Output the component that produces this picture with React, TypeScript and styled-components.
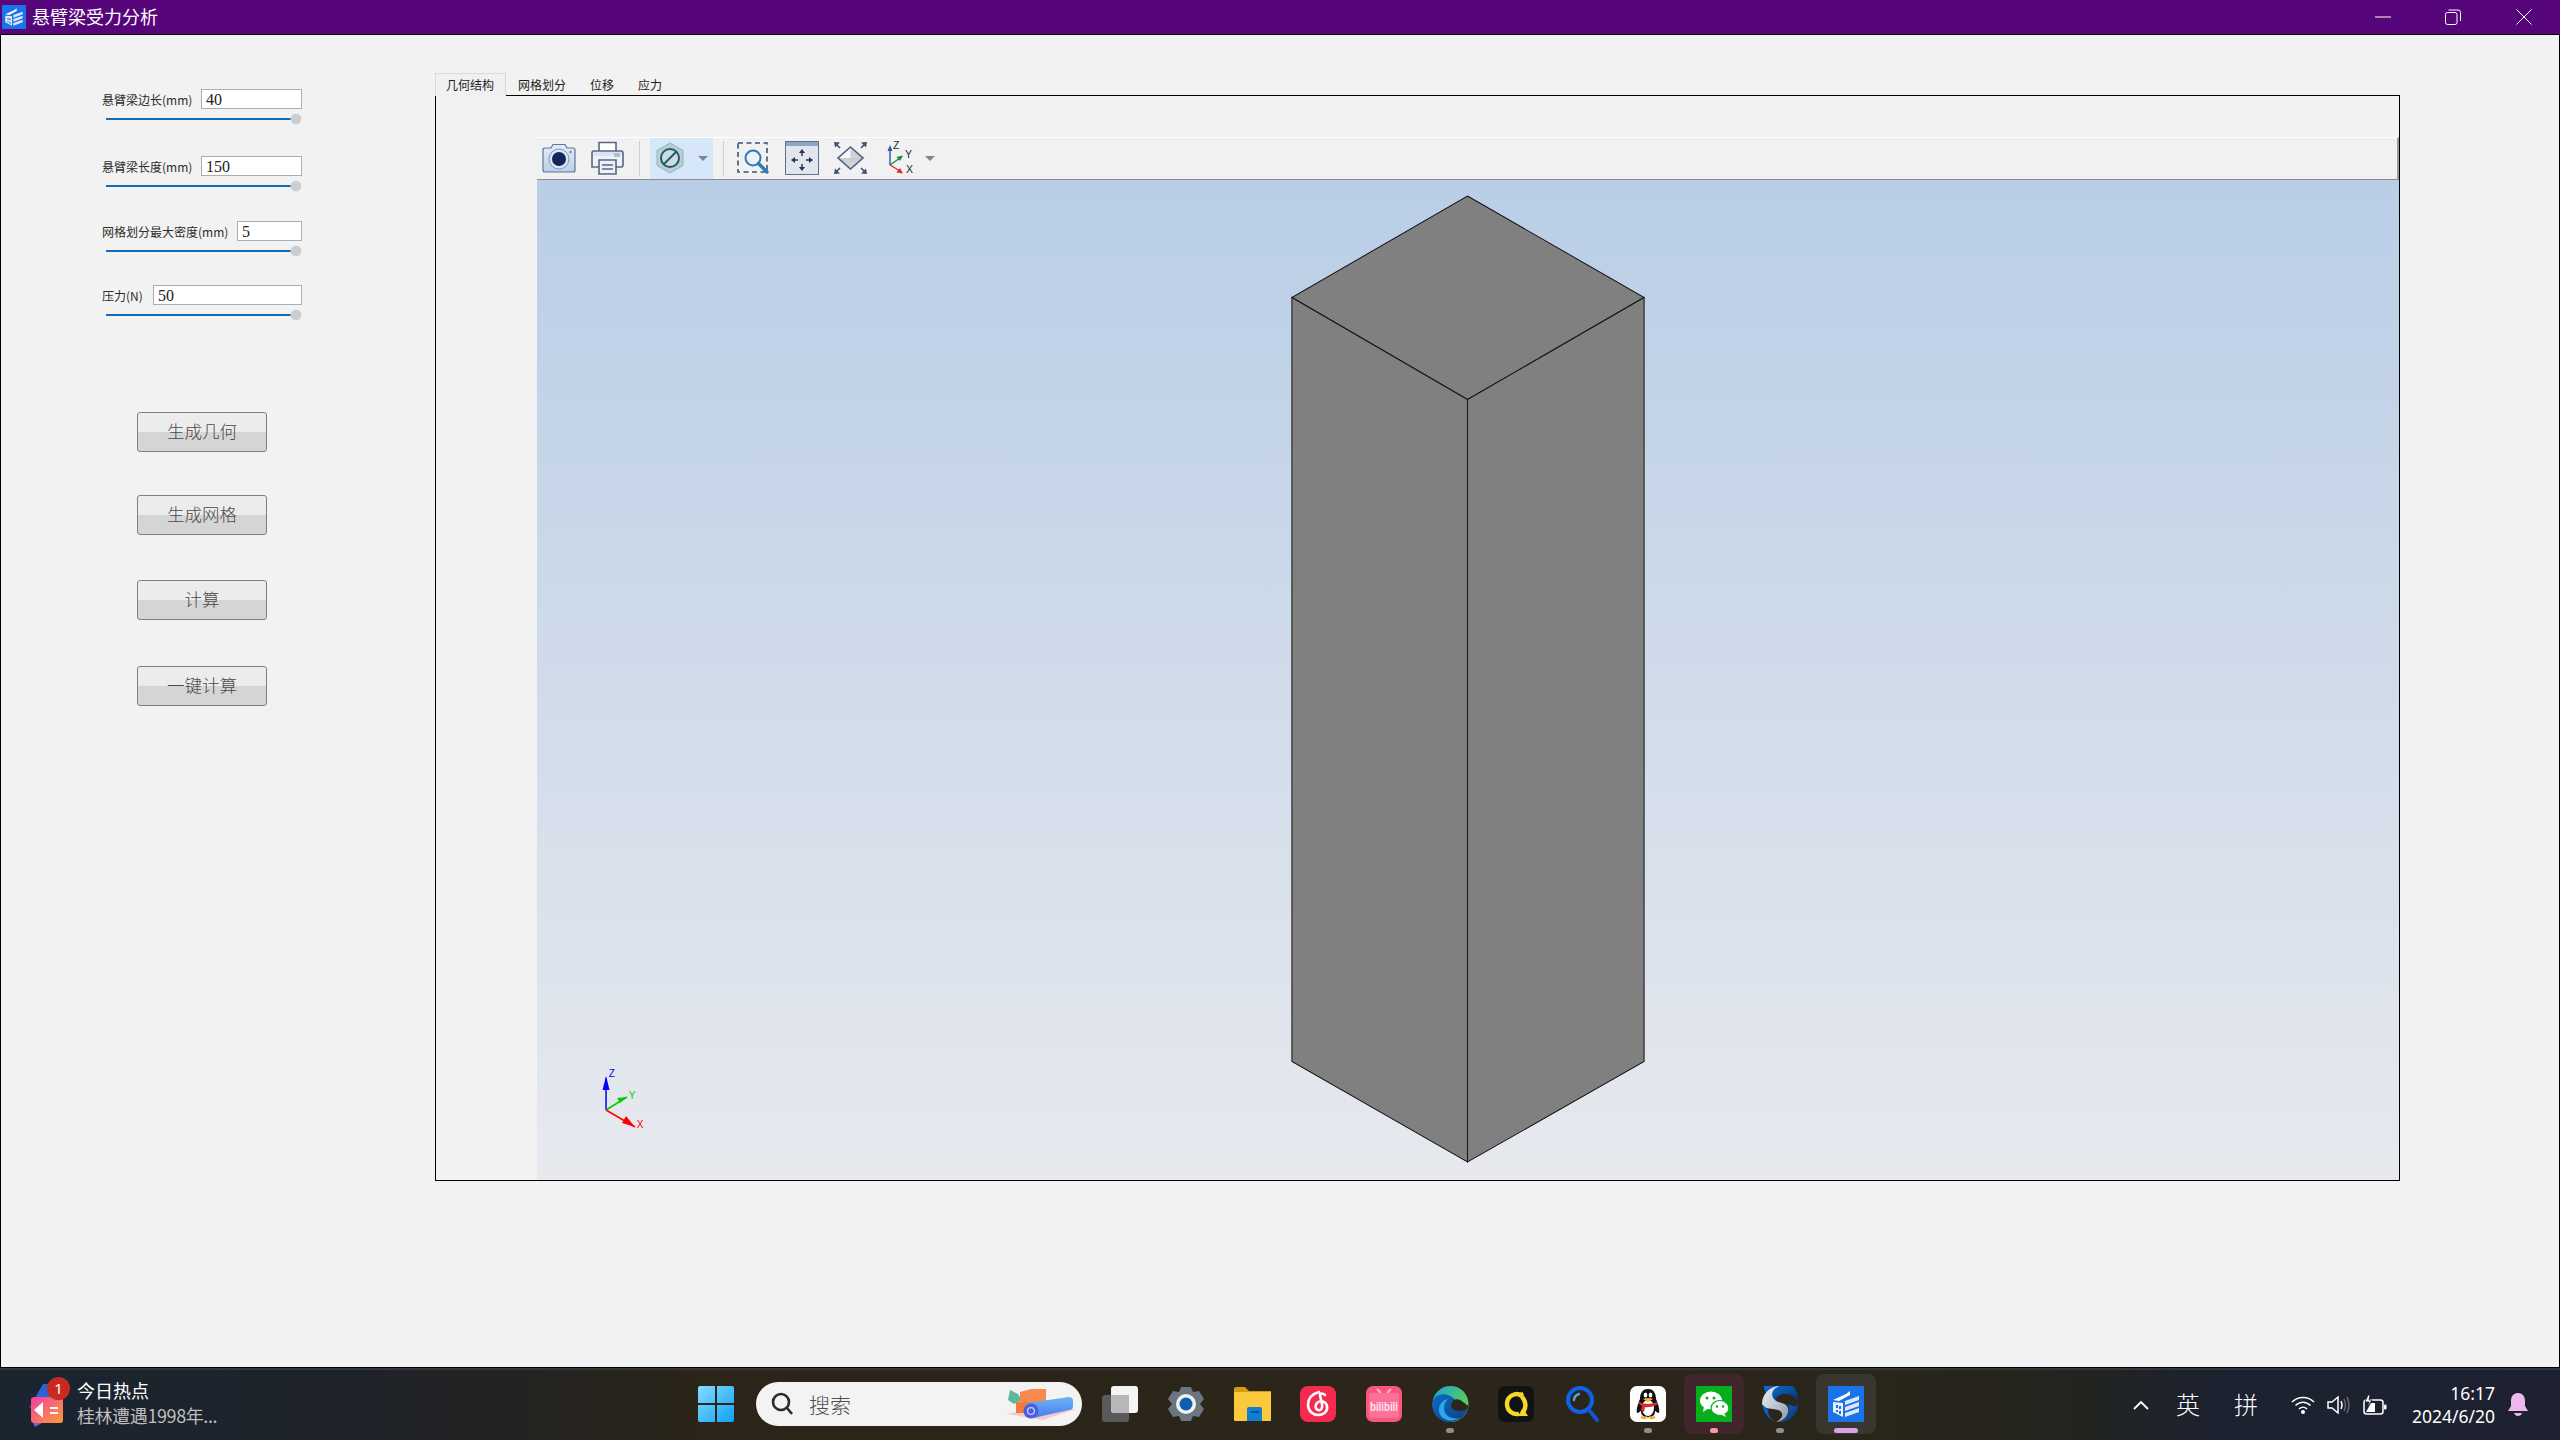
import React from "react";
import styled, { createGlobalStyle } from "styled-components";

const cjk = `"Noto Sans CJK SC", "Noto Sans", sans-serif`;

const Global = createGlobalStyle`
  html, body { margin: 0; padding: 0; background: #f2f2f2; overflow: hidden; }
  * { box-sizing: border-box; }
`;

const Screen = styled.div`
  width: 2560px; height: 1440px; display: flex; flex-direction: column; font-family: ${cjk};
`;

/* ---------- title bar ---------- */
const TitleBar = styled.div`
  height: 34px; flex: none; background: #56057b; display: flex; align-items: center; padding-left: 2px;
`;
const TitleText = styled.span`
  color: #fff; font-size: 18px; margin: -2px 0 0 6px; line-height: 34px; font-weight: 400;
`;
const WinControls = styled.div`
  margin-left: auto; display: flex; height: 100%; padding-right: 1px;
`;
const WinControl = styled.div`
  width: 70.5px; height: 34px; display: flex; align-items: center; justify-content: center;
  svg { display: block; }
`;

/* ---------- window ---------- */
const Window = styled.div`
  flex: 1; min-height: 0; background: #f2f2f2; border: 1px solid #000; display: flex;
`;
const Sidebar = styled.div`
  width: 434px; flex: none; padding: 54px 0 0 101px;
`;
const ParamGroup = styled.div<{ $top: number }>`
  width: 200px; margin-top: ${(p) => p.$top}px;
`;
const ParamRow = styled.div`
  display: flex; align-items: center; justify-content: space-between; height: 20px;
`;
const ParamLabel = styled.label`
  font-size: 12px; color: #2c2c2c; white-space: nowrap; line-height: 21px;
`;
const ParamInput = styled.input<{ $w: number }>`
  width: ${(p) => p.$w}px; height: 20px; border: 1px solid #adadad; background: #fff; padding: 2px 0 0 4px;
  font: 16px "Liberation Serif", serif; color: #222; outline: none;
`;
const SliderTrack = styled.div`
  position: relative; margin: 9px 0 0 4px; width: 185px; height: 2px; background: #0f6cbd;
`;
const SliderThumb = styled.div`
  position: absolute; left: 185px; top: -4px; width: 10px; height: 10px; border-radius: 50%;
  background: #cdcdcd; box-shadow: 0 0 0 0.5px #d8d8d8;
`;
const ButtonStack = styled.div`
  display: flex; flex-direction: column; align-items: flex-start; padding-left: 35px;
`;
const ActionButton = styled.button<{ $top: number }>`
  width: 130px; height: 40px; margin-top: ${(p) => p.$top}px; padding: 0 0 3px; border: 1px solid #808080; border-radius: 3px;
  background: linear-gradient(180deg, #ececec 0, #ececec 50%, #d5d5d5 50%, #d5d5d5 100%);
  font: 300 17.5px ${cjk}; color: #4a4a4a;
`;

/* ---------- tabs ---------- */
const Main = styled.div`
  width: 1965px; flex: none; padding-top: 38px; display: flex; flex-direction: column;
`;
const TabBar = styled.div`
  display: flex; height: 22px; position: relative; z-index: 1;
`;
const Tab = styled.div<{ $active?: boolean }>`
  height: ${(p) => (p.$active ? "23px" : "22px")}; padding: 0 12px; font-size: 12px; line-height: 24px; color: #1c1c1c;
  ${(p) => (p.$active ? "background:#f0f0f0; border:1px solid #dadada; border-bottom:none; padding:0 11px 0 10px; line-height:22px;" : "")}
`;
const Frame = styled.div`
  height: 1086px; border: 1px solid #000; padding: 41px 0 0 101px; display: flex; flex-direction: column;
`;
const ViewToolbar = styled.div`
  height: 43px; flex: none; background: #f1f1f1; border-top: 1px solid #fff; border-bottom: 1px solid #8c8c8c;
  border-right: 2px solid #9a9a9a; display: flex; align-items: center; padding: 0 0 1px 5px;
`;
const ToolIcon = styled.div<{ $ml: number }>`
  margin-left: ${(p) => p.$ml}px; display: flex; svg { display: block; }
`;
const ToolSeparator = styled.div<{ $ml: number }>`
  width: 1px; height: 35px; background: #cfcfcf; margin-left: ${(p) => p.$ml}px;
`;
const ActiveTool = styled.div`
  width: 63px; height: 41px; margin: 1px 0 0 10px; background: #d6e6fb; display: flex; align-items: center; padding: 0 0 1px 6px;
  svg { display: block; }
`;
const DropArrow = styled.div<{ $ml: number }>`
  margin-left: ${(p) => p.$ml}px; width: 0; height: 0; border-left: 5px solid transparent; border-right: 5px solid transparent;
  border-top: 5px solid #858585;
`;
const Canvas = styled.div`
  flex: 1; min-height: 0; background: linear-gradient(180deg, #b9cee6 0%, #e7e9ee 100%);
  svg { display: block; width: 100%; height: 100%; }
`;

/* ---------- taskbar ---------- */
const Taskbar = styled.div`
  height: 72px; flex: none; display: flex; align-items: stretch; border-top: 2px solid #34363a;
  background: linear-gradient(90deg, #1a2530 0%, #1e2229 14%, #2a2419 27%, #2b251a 60%, #2a251b 74%, #22241f 81%, #1c2130 87%, #1d2130 100%);
`;
const NewsWidget = styled.div`
  width: 686px; flex: none; display: flex; align-items: center; padding-left: 29px; position: relative;
`;
const NewsText = styled.div`
  margin: -5px 0 0 14px; display: flex; flex-direction: column;
`;
const NewsTitle = styled.div`
  font-size: 18px; line-height: 25px; color: #fff;
`;
const NewsSub = styled.div`
  font-size: 18px; line-height: 25px; color: #bfbfbf; white-space: nowrap; letter-spacing: -0.4px;
`;
const NewsBadge = styled.div`
  position: absolute; left: 47px; top: 7px; width: 23px; height: 23px; border-radius: 50%; background: #c92a20;
  color: #fff; font: 15px/23px "Noto Sans", sans-serif; text-align: center;
`;
const Slot = styled.div<{ $tint?: string }>`
  position: relative; width: 60px; height: 60px; margin-top: 4px; border-radius: 8px; flex: none;
  display: flex; align-items: center; justify-content: center;
  background: ${(p) => p.$tint ?? "transparent"};
  svg { display: block; }
`;
const RunDot = styled.div<{ $color: string; $wide?: boolean }>`
  position: absolute; bottom: 1px; left: 50%; transform: translateX(-50%); height: 5px; border-radius: 3px;
  width: ${(p) => (p.$wide ? "24px" : "8px")}; background: ${(p) => p.$color};
`;
const SearchPill = styled.div`
  width: 326px; height: 44px; flex: none; margin: 12px 0 0 10px; border-radius: 22px; background: #f3f3f3;
  display: flex; align-items: center; padding-left: 15px; position: relative;
`;
const SearchText = styled.span`
  font-size: 21px; line-height: 30px; color: #505050; margin-left: 16px; font-weight: 300; white-space: nowrap; flex: none;
`;
const SearchArt = styled.div`
  margin-left: auto; margin-right: 5px; svg { display: block; }
`;
const AppRow = styled.div`
  display: flex; gap: 6px; margin-left: 8px;
`;
const Tray = styled.div`
  margin-left: auto; display: flex; align-items: center; padding-right: 32px; color: #fff;
`;
const TrayIcon = styled.div<{ $ml: number }>`
  margin-left: ${(p) => p.$ml}px; display: flex; svg { display: block; }
`;
const TrayGlyph = styled.div<{ $ml: number }>`
  margin: -3px 0 0 ${(p) => p.$ml}px; font-size: 24px; line-height: 30px; width: 22px; display: flex; justify-content: center;
  font-weight: 300; white-space: nowrap;
`;
const Clock = styled.div`
  margin: -1px 0 0 26px; width: 82px; font: 17.5px/23px "Noto Sans", sans-serif; color: #fff; white-space: nowrap;
  display: flex; flex-direction: column; align-items: flex-end;
`;

/* ---------- drawings ---------- */
const AppLogo = ({ size }: { size: number }) => (
  <svg width={size} height={size} viewBox="0 0 36 36">
    <rect width="36" height="36" fill="#1a73e8" />
    <path d="M5 14 L18 8 L22 5 L22 9 L11 15 Z" fill="#fff" />
    <path d="M5 16 L15 17 L15 31 L5 26 Z" fill="#e8f0ff" />
    <path d="M8 19 h2 v3 h-2 Z M11 20 h2 v3 h-2 Z M8 24 h2 v2 h-2 Z M11 25 h2 v3 h-2 Z" fill="#1a73e8" />
    <path d="M17 15 L31 10 L31 14 L17 19 Z M17 21 L31 16 L31 20 L17 25 Z M17 27 L31 22 L31 26 L17 31 Z" fill="#dce8ff" />
  </svg>
);

const CameraIcon = () => (
  <svg width="34" height="30" viewBox="0 0 34 30">
    <defs>
      <linearGradient id="camB" x1="0" y1="0" x2="0" y2="1"><stop offset="0" stopColor="#e4edf8" /><stop offset="1" stopColor="#bccee6" /></linearGradient>
    </defs>
    <path d="M1 7 Q1 5 3 5 H9 L11 1.5 H23 L25 5 H31 Q33 5 33 7 V27 Q33 29 31 29 H3 Q1 29 1 27 Z" fill="url(#camB)" stroke="#5a769e" strokeWidth="1.2" />
    <circle cx="17" cy="16" r="10" fill="#dbe6f3" stroke="#7f9abd" />
    <circle cx="17" cy="16" r="7" fill="#10275c" />
    <circle cx="28.5" cy="9" r="1.2" fill="#6c86aa" />
  </svg>
);
const PrinterIcon = () => (
  <svg width="33" height="34" viewBox="0 0 33 34">
    <path d="M8 10 V1.5 H25 V10" fill="#fff" stroke="#54688a" strokeWidth="1.6" />
    <path d="M1 12 Q1 10 3 10 H30 Q32 10 32 12 V24 Q32 26 30 26 H1 Z" fill="#eef1f5" stroke="#54688a" strokeWidth="1.6" />
    <rect x="2" y="11" width="29" height="4" fill="#dfe3ea" />
    <path d="M23 13 h6 M23 15 h6" stroke="#8794a8" strokeWidth="1" />
    <path d="M8 19 H25 V33 H8 Z" fill="#eef1f5" stroke="#54688a" strokeWidth="1.6" />
    <path d="M11 24 H22 M11 28 H22" stroke="#54688a" strokeWidth="1.6" />
  </svg>
);
const NoEntryIcon = () => (
  <svg width="28" height="32" viewBox="0 0 28 32">
    <path d="M14 1 L27 8.5 V23.5 L14 31 L1 23.5 V8.5 Z" fill="#b8cfd6" stroke="#9bb1ba" />
    <circle cx="14" cy="16" r="9" fill="#cddde2" stroke="#1e5a68" strokeWidth="2" />
    <path d="M8 22 L20 10" stroke="#1e5a68" strokeWidth="2" />
  </svg>
);
const ZoomBoxIcon = () => (
  <svg width="32" height="32" viewBox="0 0 32 32">
    <rect x="1" y="1" width="29" height="29" fill="none" stroke="#3b5276" strokeWidth="1.6" strokeDasharray="5 3.5" />
    <circle cx="16" cy="16" r="7.5" fill="#eaf2f9" stroke="#2e7bb8" strokeWidth="2" />
    <path d="M21.5 21.5 L30 30" stroke="#2e7bb8" strokeWidth="3.4" strokeLinecap="round" />
  </svg>
);
const FitIcon = () => (
  <svg width="34" height="34" viewBox="0 0 34 34">
    <rect x="0.5" y="0.5" width="33" height="33" fill="#e2e5ec" stroke="#5c7094" />
    <rect x="1" y="1" width="32" height="4" fill="#8fa5c4" />
    <path d="M17 11 V15 M17 23 V27 M9 19 H13 M21 19 H25" stroke="#1f3557" strokeWidth="1.4" />
    <path d="M17 8 l-3 4 h6 Z M17 30 l-3 -4 h6 Z M6 19 l4 -3 v6 Z M28 19 l-4 -3 v6 Z" fill="#1f3557" />
  </svg>
);
const IsoIcon = () => (
  <svg width="33" height="34" viewBox="0 0 33 34">
    <defs>
      <linearGradient id="isoB" x1="0" y1="0" x2="0" y2="1"><stop offset="0" stopColor="#b4b7bd" /><stop offset="1" stopColor="#dcdde0" /></linearGradient>
    </defs>
    <path d="M16.5 6 L29 17 L16.5 28 L4 17 Z" fill="url(#isoB)" />
    <path d="M16.5 6 L29 17 H4 Z" fill="#f7f7f8" />
    <path d="M16.5 6 L29 17 H16.5 Z" fill="#cfd1d6" />
    <path d="M16.5 6 L29 17 L16.5 28 L4 17 Z" fill="none" stroke="#4c5f80" strokeWidth="1.6" />
    <path d="M0 1 L6 1.5 L1 6.5 Z M33 1 L27 1.5 L32 6.5 Z M0 33 L6 32.5 L1 27.5 Z M33 33 L27 32.5 L32 27.5 Z" fill="#3c5078" />
    <path d="M2 3 L6 7 M31 3 L27 7 M2 31 L6 27 M31 31 L27 27" stroke="#3c5078" strokeWidth="1.6" />
  </svg>
);
const AxesToolIcon = () => (
  <svg width="30" height="36" viewBox="0 0 30 36">
    <path d="M4 25 V8" stroke="#2a56a8" strokeWidth="1.4" />
    <path d="M4 5 L1.5 11 H6.5 Z" fill="#2a56a8" />
    <path d="M4 25 L14 18" stroke="#1c8a3c" strokeWidth="1.4" />
    <path d="M17 15.5 L10.5 17 L14 21 Z" fill="#1c8a3c" />
    <path d="M4 25 L14 31" stroke="#e02828" strokeWidth="1.4" />
    <path d="M17 33.5 L10.5 32.5 L14 28 Z" fill="#e02828" />
    <text x="7" y="9" fontSize="10.5" fontFamily="Liberation Sans" fill="#2a2a2a">Z</text>
    <text x="19" y="18" fontSize="10.5" fontFamily="Liberation Sans" fill="#2a2a2a">Y</text>
    <text x="20" y="33" fontSize="10.5" fontFamily="Liberation Sans" fill="#2a2a2a">X</text>
  </svg>
);

const SceneAxisText = styled.text`
  font: 10px "Liberation Sans", sans-serif; text-anchor: middle;
`;

const Scene = () => {
  const o = (x: number, y: number) => `${x - 537},${y - 180}`;
  const stroke = { stroke: "#141414", strokeWidth: 1, fill: "#808080", strokeLinejoin: "miter" as const };
  return (
    <svg viewBox="0 0 1861 1000" preserveAspectRatio="none">
      <polygon points={[o(1467, 196), o(1643.5, 297.5), o(1467, 399.5), o(1291.5, 297.5)].join(" ")} {...stroke} />
      <polygon points={[o(1291.5, 297.5), o(1467, 399.5), o(1467, 1162), o(1291.5, 1061.5)].join(" ")} {...stroke} />
      <polygon points={[o(1643.5, 297.5), o(1467, 399.5), o(1467, 1162), o(1643.5, 1061.5)].join(" ")} {...stroke} />
      <g transform="translate(69 930)">
        <path d="M0 0 V-32" stroke="#0000ff" strokeWidth="1.5" />
        <path d="M0 -34 L-3.5 -20 H3.5 Z" fill="#0000ff" />
        <path d="M0 0 L21 -13" stroke="#00cc00" strokeWidth="1.5" />
        <path d="M21 -13 L11 -12 L14 -7 Z" fill="#00cc00" />
        <path d="M0 0 L29 17" stroke="#ff0000" strokeWidth="1.5" />
        <path d="M29 17 L16 13 L20 6 Z" fill="#ff0000" />
        <SceneAxisText x="5.7" y="-33" fill="#0000ff">Z</SceneAxisText>
        <SceneAxisText x="26" y="-11.5" fill="#00cc00">Y</SceneAxisText>
        <SceneAxisText x="34" y="17.7" fill="#ff0000">X</SceneAxisText>
      </g>
    </svg>
  );
};

/* taskbar icons */
const NewsIcon = () => (
  <svg width="34" height="46" viewBox="0 0 34 46">
    <defs>
      <linearGradient id="nws" x1="0" y1="0" x2="1" y2="1"><stop offset="0" stopColor="#f23fa0" /><stop offset="1" stopColor="#ff9a3a" /></linearGradient>
    </defs>
    <path d="M14 2 L26 2 L26 16 L0 26 Z" fill="#2a62d8" />
    <path d="M3 38 L26 33 L6 45 Z" fill="#7c54ee" />
    <rect x="2" y="15" width="32" height="26" rx="3" fill="url(#nws)" />
    <path d="M5 28 L14 20 V36 Z" fill="#fff" />
    <path d="M21 26 h8 M21 31 h8" stroke="#fff" strokeWidth="2" />
  </svg>
);
const WindowsLogo = () => (
  <svg width="36" height="36" viewBox="0 0 36 36">
    <defs>
      <linearGradient id="winA" x1="0" y1="0" x2="1" y2="1"><stop offset="0" stopColor="#86dcff" /><stop offset="1" stopColor="#10a0f8" /></linearGradient>
    </defs>
    <path d="M2 0 H17 V17 H0 V2 Q0 0 2 0 Z M19 0 H34 Q36 0 36 2 V17 H19 Z M0 19 H17 V36 H2 Q0 36 0 34 Z M19 19 H36 V34 Q36 36 34 36 H19 Z" fill="url(#winA)" />
  </svg>
);
const SearchGlass = () => (
  <svg width="22" height="24" viewBox="0 0 22 24">
    <circle cx="10" cy="10" r="8" fill="none" stroke="#2b2b2b" strokeWidth="2.6" />
    <path d="M16 16 L21 22" stroke="#2b2b2b" strokeWidth="2.6" />
  </svg>
);
const SearchArtwork = () => (
  <svg width="70" height="32" viewBox="0 0 70 32">
    <defs>
      <linearGradient id="artRoll" x1="0" y1="0" x2="0" y2="1"><stop offset="0" stopColor="#6db4f6" /><stop offset="1" stopColor="#4a7cec" /></linearGradient>
    </defs>
    <path d="M0 26 L14 23 L69 21 L36 32 Z" fill="#f5c6cf" />
    <path d="M1 12 L3 2 L11 6 L15 12 L7 16 Z" fill="#5bb89a" />
    <path d="M13 4 L24 1 L39 1 L39 14 L13 14 Z" fill="#f58a4a" />
    <rect x="9" y="14" width="18" height="11" fill="#f07a3c" />
    <path d="M20 15 L62 9 Q66 9 66 13 V18 Q66 22 62 22 L26 30 Z" fill="url(#artRoll)" />
    <circle cx="24" cy="23" r="7.5" fill="#4a5ee0" />
    <circle cx="24" cy="23" r="3.4" fill="none" stroke="#c0ccff" strokeWidth="1.4" />
  </svg>
);
const TaskViewIcon = () => (
  <svg width="36" height="36" viewBox="0 0 36 36">
    <rect x="0" y="9" width="27" height="27" rx="3" fill="#5a5a5a" />
    <rect x="9" y="0" width="27" height="27" rx="3" fill="#f4f4f4" />
    <path d="M9 9 H27 V27 H12 Q9 27 9 24 Z" fill="#b8b8b8" />
  </svg>
);
const GearIcon = () => (
  <svg width="36" height="36" viewBox="0 0 36 36">
    <path d="M13 1 H23 L25 6 L31 5 L36 13 L32 18 L36 23 L31 31 L25 30 L23 35 H13 L11 30 L5 31 L0 23 L4 18 L0 13 L5 5 L11 6 Z" fill="#6c7681" />
    <circle cx="18" cy="18" r="10" fill="#f1f1f1" />
    <circle cx="18" cy="18" r="6.5" fill="#0c5eb0" />
  </svg>
);
const FolderIcon = () => (
  <svg width="37" height="34" viewBox="0 0 37 34">
    <path d="M0 2 Q0 0 2 0 H11 L15 4 H37 V10 H0 Z" fill="#d69a10" />
    <path d="M0 5 H37 V33 Q37 34 36 34 H1 Q0 34 0 33 Z" fill="#fcc93c" />
    <path d="M13 22 Q13 20 15 20 H26 Q28 20 28 22 V34 H13 Z" fill="#0f7fd0" />
    <rect x="17" y="24" width="8" height="2" fill="#0a4f8e" />
  </svg>
);
const NeteaseIcon = () => (
  <svg width="36" height="36" viewBox="0 0 36 36">
    <rect width="36" height="36" rx="8" fill="#f62a4e" />
    <path d="M19 6 C12 8 8 13 8 19 C8 25 13 29 18 29 C24 29 28 25 27 20 C26 15 20 14 17 17 C15 19 15 23 18 24 C21 25 23 22 22 18 L20 9 C20 7 23 7 25 9" fill="none" stroke="#fff" strokeWidth="2.6" strokeLinecap="round" />
  </svg>
);
const BiliIcon = () => (
  <svg width="36" height="36" viewBox="0 0 36 36">
    <rect width="36" height="36" rx="7" fill="#f8567f" />
    <path d="M11 3 L15 7 M25 3 L21 7" stroke="#ffb4c8" strokeWidth="1.8" />
    <rect x="3" y="7" width="30" height="25" rx="3" fill="#fb7299" />
    <text x="18" y="25" textAnchor="middle" fontSize="12" fontWeight="700" textLength="28" lengthAdjust="spacingAndGlyphs" fontFamily="Liberation Sans" fill="#ffe4ec">bilibili</text>
  </svg>
);
const EdgeIcon = () => (
  <svg width="37" height="36" viewBox="0 0 37 36">
    <defs>
      <linearGradient id="edA" x1="0" y1="0" x2="1" y2="0.6"><stop offset="0" stopColor="#1ba0d8" /><stop offset="1" stopColor="#5fd34c" /></linearGradient>
      <linearGradient id="edB" x1="0" y1="0" x2="1" y2="1"><stop offset="0" stopColor="#0c6bc0" /><stop offset="1" stopColor="#0d3f86" /></linearGradient>
    </defs>
    <circle cx="18.5" cy="18" r="18" fill="url(#edA)" />
    <path d="M0.5 18 C1 9 10 7 16 9 C24 12 27 20 36 22 C33 31 26 36 18 36 C7 36 0 28 0.5 18 Z" fill="url(#edB)" />
    <path d="M36.5 20 C36 23 32 25 27 25 C20 25 17 20 21 15 C24 12 28 13 31 16 Z" fill="#2b251a" />
    <path d="M12 22 C12 30 20 34 28 32 C22 36 10 36 7 26 C6 20 10 14 16 13 C13 16 12 19 12 22 Z" fill="#2ba8e8" />
  </svg>
);
const RingIcon = () => (
  <svg width="36" height="36" viewBox="0 0 36 36">
    <rect width="36" height="36" rx="7" fill="#101214" />
    <path d="M25 10 C18 5 9 10 9 18 C9 25 15 29 21 28" fill="none" stroke="#f6d724" strokeWidth="4.4" />
    <path d="M17 8 L25 6 L24 13 Z" fill="#f6d724" />
    <path d="M24 11 C28 15 29 22 24 27" fill="none" stroke="#f6d724" strokeWidth="4.4" />
    <path d="M25 22 L30 30 L20 30 Z" fill="#f6d724" />
  </svg>
);
const BlueSearchIcon = () => (
  <svg width="33" height="36" viewBox="0 0 33 36">
    <circle cx="14" cy="14" r="12" fill="none" stroke="#0f62e6" strokeWidth="4" />
    <path d="M23 24 L31 34" stroke="#0f55d0" strokeWidth="4" strokeLinecap="round" />
    <path d="M8 14 C8 11 10 9 13 8" fill="none" stroke="#47a8e8" strokeWidth="2.4" strokeLinecap="round" />
  </svg>
);
const QQIcon = () => (
  <svg width="36" height="36" viewBox="0 0 36 36">
    <rect width="36" height="36" rx="7" fill="#fff" />
    <path d="M18 3 C12 3 10 8 10 13 C8 18 6 23 7 27 C9 27 10 25 11 25 C11 29 13 31 18 31 C23 31 25 29 25 25 C26 25 27 27 29 27 C30 23 28 18 26 13 C26 8 24 3 18 3 Z" fill="#111" />
    <ellipse cx="18" cy="22" rx="6" ry="8" fill="#fff" />
    <ellipse cx="15.5" cy="9" rx="1.8" ry="2.6" fill="#fff" />
    <ellipse cx="20.5" cy="9" rx="1.8" ry="2.6" fill="#fff" />
    <path d="M13 13 Q18 11 23 13 L18 16 Z" fill="#f6b020" />
    <path d="M9 16 Q18 20 27 16 L27 19 Q18 22 15 21 L14 26 L11 24 L12 20 L9 18 Z" fill="#e0282c" />
    <path d="M11 31 Q14 33 17 31 M19 31 Q22 33 25 31" stroke="#f6b020" strokeWidth="2.4" fill="none" />
  </svg>
);
const WeChatIcon = () => (
  <svg width="36" height="36" viewBox="0 0 36 36">
    <rect width="36" height="36" fill="#07af1c" />
    <ellipse cx="15" cy="14.5" rx="11" ry="9" fill="#fff" />
    <path d="M8 20 L7 26 L13 22 Z" fill="#fff" />
    <ellipse cx="24" cy="22" rx="9" ry="7.5" fill="#fff" stroke="#07af1c" strokeWidth="1.2" />
    <path d="M28 27 L30 31 L24 28 Z" fill="#fff" />
    <circle cx="11" cy="12" r="1.5" fill="#07af1c" /><circle cx="18" cy="12" r="1.5" fill="#07af1c" />
    <circle cx="21" cy="20.5" r="1.2" fill="#07af1c" /><circle cx="27" cy="20.5" r="1.2" fill="#07af1c" />
  </svg>
);
const SwirlIcon = () => (
  <svg width="36" height="36" viewBox="0 0 36 36">
    <defs>
      <linearGradient id="swA" x1="0" y1="0" x2="1" y2="1"><stop offset="0" stopColor="#0b6fd8" /><stop offset="1" stopColor="#0a2a68" /></linearGradient>
      <linearGradient id="swB" x1="0" y1="0" x2="1" y2="1"><stop offset="0" stopColor="#f0f3f7" /><stop offset="1" stopColor="#8a99ab" /></linearGradient>
    </defs>
    <path d="M2 0 H30 Q36 2 36 18 C36 14 31 8 24 8 C19 8 14 10 14 14 C8 10 2 8 2 0 Z" fill="url(#swA)" />
    <path d="M0 18 C0 8 8 0 18 0 C11 2 8 8 12 13 C16 18 24 16 26 22 C28 30 20 36 14 36 C22 32 22 26 16 24 C10 22 2 24 0 18 Z" fill="url(#swB)" />
    <path d="M0 18 C2 28 8 36 18 36 C10 36 6 30 6 24 C4 22 2 20 0 18 Z" fill="#0b5ec4" />
    <path d="M36 18 C36 28 28 36 18 36 C26 32 29 26 26 18 C30 20 34 22 36 18 Z" fill="url(#swA)" />
  </svg>
);
const WifiIcon = () => (
  <svg width="24" height="20" viewBox="0 0 24 20">
    <path d="M1 7 C7 1 17 1 23 7 M4.5 10.5 C9 6 15 6 19.5 10.5 M8 14 C10.5 11.5 13.5 11.5 16 14" fill="none" stroke="#fff" strokeWidth="1.5" />
    <circle cx="12" cy="17" r="2" fill="#fff" />
  </svg>
);
const VolumeIcon = () => (
  <svg width="24" height="20" viewBox="0 0 24 20">
    <path d="M1 7 H5 L11 2 V18 L5 13 H1 Z" fill="none" stroke="#fff" strokeWidth="1.5" />
    <path d="M14 6 Q16 10 14 14" fill="none" stroke="#fff" strokeWidth="1.5" />
    <path d="M17 4 Q20 10 17 16 M20 2 Q24 10 20 18" fill="none" stroke="#666a72" strokeWidth="1.5" />
  </svg>
);
const BatteryIcon = () => (
  <svg width="24" height="20" viewBox="0 0 24 20">
    <rect x="1" y="5" width="19" height="14" rx="2.5" fill="none" stroke="#fff" strokeWidth="1.5" />
    <rect x="21" y="9.5" width="2.5" height="5" rx="1" fill="#fff" />
    <path d="M3 17 L8 8 H12 V17 Z" fill="#fff" />
    <path d="M5 0 L2 7 H6 L4 13 L9 5 H6 L7 0 Z" fill="#fff" stroke="#1c2130" strokeWidth="0.8" />
  </svg>
);
const BellIcon = () => (
  <svg width="20" height="24" viewBox="0 0 20 24">
    <path d="M10 0 C5 0 3 4 3 8 V13 L0 18 H20 L17 13 V8 C17 4 15 0 10 0 Z" fill="#ecb8ef" />
    <path d="M6 20 H14 Q13 23 10 23 Q7 23 6 20 Z" fill="#ecb8ef" />
  </svg>
);

const params = [
  { label: "悬臂梁边长(mm)", value: "40", top: 0, w: 101 },
  { label: "悬臂梁长度(mm)", value: "150", top: 36, w: 101 },
  { label: "网格划分最大密度(mm)", value: "5", top: 34, w: 65 },
  { label: "压力(N)", value: "50", top: 33, w: 149 },
];
const actions = [
  { label: "生成几何", top: 96 },
  { label: "生成网格", top: 43 },
  { label: "计算", top: 45 },
  { label: "一键计算", top: 46 },
];
const tabs = ["几何结构", "网格划分", "位移", "应力"];
const dotGrey = "#8e8e8e";
const apps: { icon: React.ReactNode; dot?: string; tint?: string; wide?: boolean }[] = [
  { icon: <TaskViewIcon /> },
  { icon: <GearIcon /> },
  { icon: <FolderIcon /> },
  { icon: <NeteaseIcon /> },
  { icon: <BiliIcon /> },
  { icon: <EdgeIcon />, dot: dotGrey },
  { icon: <RingIcon /> },
  { icon: <BlueSearchIcon /> },
  { icon: <QQIcon />, dot: dotGrey },
  { icon: <WeChatIcon />, dot: "#f59aa0", tint: "#40262a" },
  { icon: <SwirlIcon />, dot: dotGrey },
  { icon: <AppLogo size={36} />, dot: "#d3a3e5", tint: "#39362f", wide: true },
];

export default function App() {
  return (
    <Screen>
      <Global />
      <TitleBar>
        <AppLogo size={24} />
        <TitleText>悬臂梁受力分析</TitleText>
        <WinControls>
          <WinControl>
            <svg width="16" height="2" viewBox="0 0 16 2"><path d="M0 1 H16" stroke="#fff" strokeWidth="1" /></svg>
          </WinControl>
          <WinControl>
            <svg width="16" height="16" viewBox="0 0 16 16"><rect x="0.5" y="3.5" width="11.5" height="12" rx="2" fill="none" stroke="#fff" /><path d="M3.5 1 H13 Q15.5 1 15.5 3.5 V12" fill="none" stroke="#fff" /></svg>
          </WinControl>
          <WinControl>
            <svg width="16" height="16" viewBox="0 0 16 16"><path d="M0.5 0.5 L15.5 15.5 M15.5 0.5 L0.5 15.5" stroke="#fff" strokeWidth="1" /></svg>
          </WinControl>
        </WinControls>
      </TitleBar>

      <Window>
        <Sidebar>
          {params.map((p) => (
            <ParamGroup key={p.label} $top={p.top}>
              <ParamRow>
                <ParamLabel>{p.label}</ParamLabel>
                <ParamInput $w={p.w} defaultValue={p.value} />
              </ParamRow>
              <SliderTrack>
                <SliderThumb />
              </SliderTrack>
            </ParamGroup>
          ))}
          <ButtonStack>
            {actions.map((a) => (
              <ActionButton key={a.label} $top={a.top}>{a.label}</ActionButton>
            ))}
          </ButtonStack>
        </Sidebar>
        <Main>
          <TabBar>
            {tabs.map((t, i) => (
              <Tab key={t} $active={i === 0}>{t}</Tab>
            ))}
          </TabBar>
          <Frame>
            <ViewToolbar>
              <ToolIcon $ml={0}><CameraIcon /></ToolIcon>
              <ToolIcon $ml={15}><PrinterIcon /></ToolIcon>
              <ToolSeparator $ml={15} />
              <ActiveTool>
                <NoEntryIcon />
                <DropArrow $ml={14} />
              </ActiveTool>
              <ToolSeparator $ml={10} />
              <ToolIcon $ml={13}><ZoomBoxIcon /></ToolIcon>
              <ToolIcon $ml={16}><FitIcon /></ToolIcon>
              <ToolIcon $ml={15}><IsoIcon /></ToolIcon>
              <ToolIcon $ml={19}><AxesToolIcon /></ToolIcon>
              <DropArrow $ml={9} />
            </ViewToolbar>
            <Canvas>
              <Scene />
            </Canvas>
          </Frame>
        </Main>
      </Window>

      <Taskbar>
        <NewsWidget>
          <NewsIcon />
          <NewsBadge>1</NewsBadge>
          <NewsText>
            <NewsTitle>今日热点</NewsTitle>
            <NewsSub>桂林遭遇1998年...</NewsSub>
          </NewsText>
        </NewsWidget>
        <Slot><WindowsLogo /></Slot>
        <SearchPill>
          <SearchGlass />
          <SearchText>搜索</SearchText>
          <SearchArt><SearchArtwork /></SearchArt>
        </SearchPill>
        <AppRow>
          {apps.map((a, i) => (
            <Slot key={i} $tint={a.tint}>
              {a.icon}
              {a.dot && <RunDot $color={a.dot} $wide={a.wide} />}
            </Slot>
          ))}
        </AppRow>
        <Tray>
          <TrayIcon $ml={0}>
            <svg width="16" height="10" viewBox="0 0 16 10"><path d="M1 9 L8 2 L15 9" fill="none" stroke="#fff" strokeWidth="1.8" /></svg>
          </TrayIcon>
          <TrayGlyph $ml={28}>英</TrayGlyph>
          <TrayGlyph $ml={36}>拼</TrayGlyph>
          <TrayIcon $ml={34}><WifiIcon /></TrayIcon>
          <TrayIcon $ml={12}><VolumeIcon /></TrayIcon>
          <TrayIcon $ml={12}><BatteryIcon /></TrayIcon>
          <Clock>
            <span>16:17</span>
            <span>2024/6/20</span>
          </Clock>
          <TrayIcon $ml={13}><BellIcon /></TrayIcon>
        </Tray>
      </Taskbar>
    </Screen>
  );
}
